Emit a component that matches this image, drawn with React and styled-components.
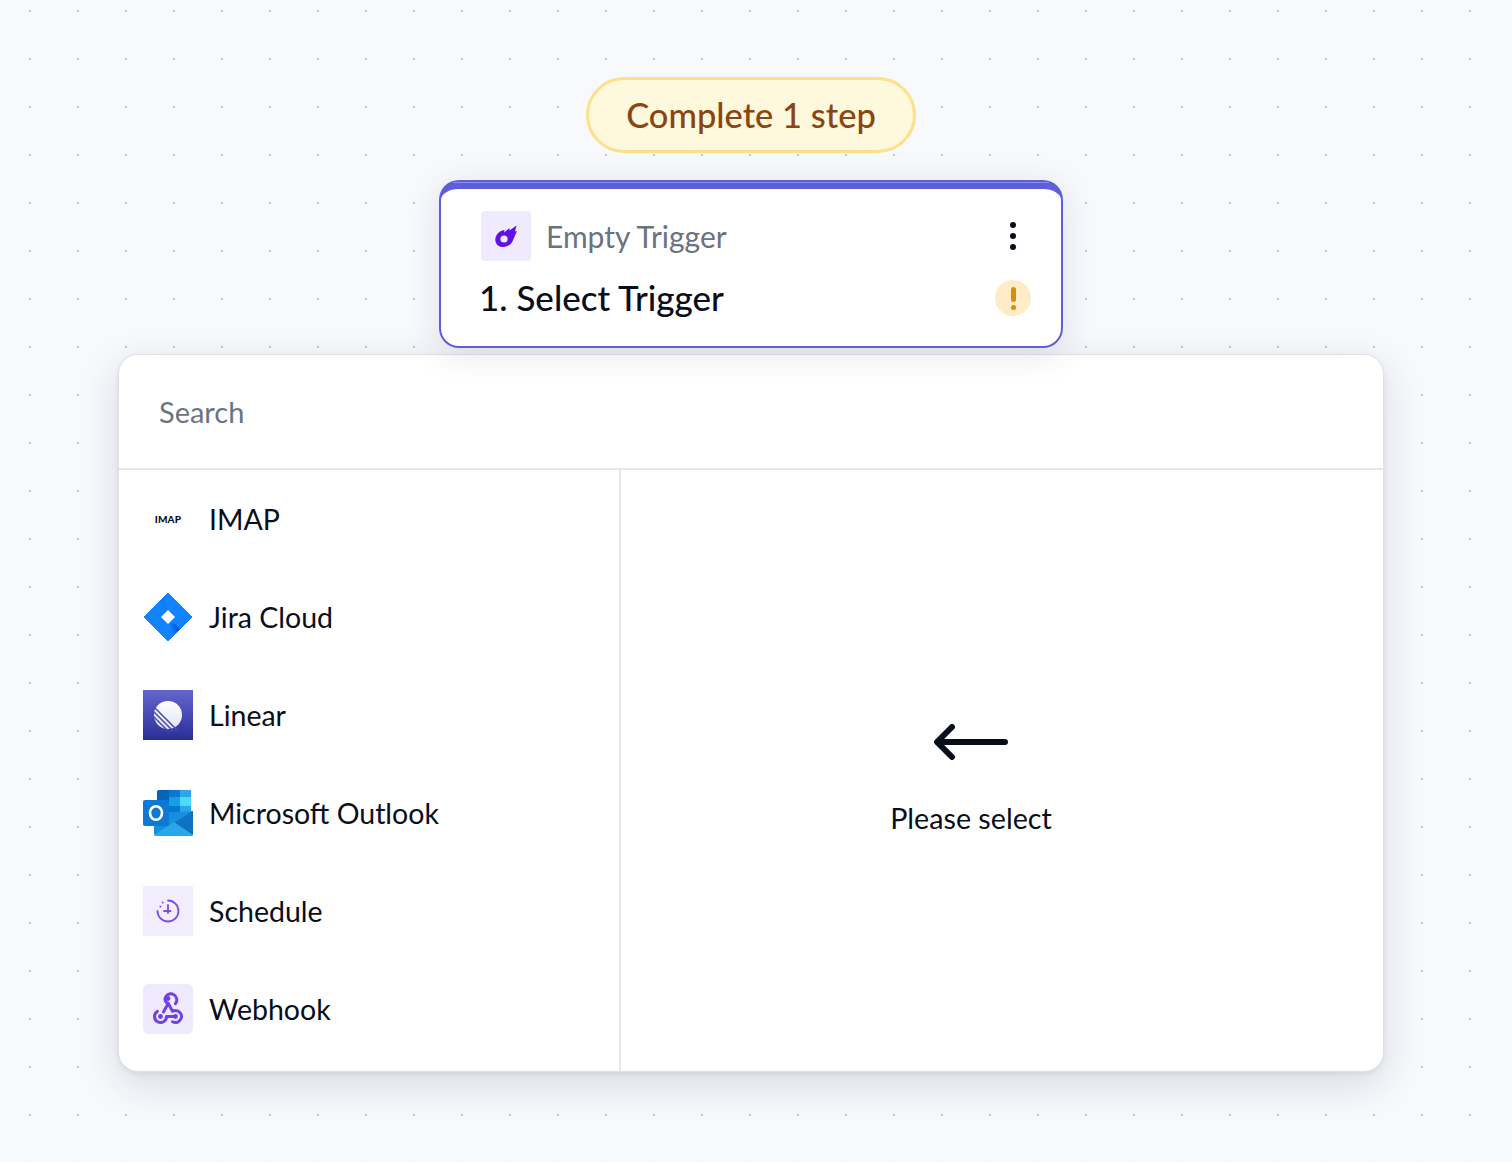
import React from 'react';
import styled, { createGlobalStyle } from 'styled-components';

const GlobalStyle = createGlobalStyle`
  html, body {
    margin: 0;
    padding: 0;
    font-family: Lato, "Noto Sans", sans-serif;
    color: #0a0d1c;
  }
`;

const Canvas = styled.div`
  box-sizing: border-box;
  width: 100%;
  height: 1162px;
  overflow: hidden;
  padding: 77px 10px 0 0;
  display: flex;
  flex-direction: column;
  align-items: center;
  background-color: #f8f9fd;
  background-image: radial-gradient(circle, #c6c8cd 1.1px, transparent 1.6px);
  background-size: 48px 48px;
  background-position: 6px -13px;
`;

const StepPill = styled.div`
  box-sizing: border-box;
  width: 330px;
  height: 76px;
  display: flex;
  align-items: center;
  justify-content: center;
  border: 3px solid #fde08a;
  border-radius: 38px;
  background: #fef8dc;
  color: #8a4510;
  font-size: 34.5px;
  font-weight: 500;
  padding-bottom: 2px;
`;

const TriggerCard = styled.div`
  position: relative;
  box-sizing: border-box;
  width: 624px;
  height: 168px;
  margin: 27px 0 6px;
  padding: 22px 30px 0 40px;
  border: 2px solid #5c5edb;
  border-top-width: 9px;
  border-radius: 20px;
  background: #fff;
  box-shadow: 0 6px 32px rgba(50, 54, 80, 0.13);
  display: flex;
  flex-direction: column;
  gap: 15px;

  &::before {
    content: '';
    position: absolute;
    top: -7px;
    left: 12px;
    right: 12px;
    height: 1px;
    background: #8a8ce8;
  }
`;

const TriggerRow = styled.div`
  display: flex;
  align-items: center;
  justify-content: space-between;
`;

const TriggerLabel = styled.div`
  display: flex;
  align-items: center;
  gap: 15px;
  color: #6b7280;
  font-size: 30px;
`;

const TriggerTitle = styled.div`
  margin-left: -2px;
  padding-bottom: 2px;
  font-size: 35px;
  font-weight: 500;
  color: #0a0d1c;
`;

const IconTile = styled.div`
  flex: none;
  width: 50px;
  height: 50px;
  display: flex;
  align-items: center;
  justify-content: center;
  border-radius: ${(p) => p.$radius || 0}px;
  background: ${(p) => p.$bg || 'transparent'};
`;

const MoreDots = styled.div`
  width: 36px;
  display: flex;
  flex-direction: column;
  align-items: center;
  gap: 5.3px;

  i {
    width: 6px;
    height: 6px;
    border-radius: 50%;
    background: #0a0d1c;
  }
`;

const WarnBadge = styled.div`
  width: 36px;
  height: 36px;
  border-radius: 50%;
  background: #feecc8;
  display: flex;
  flex-direction: column;
  align-items: center;
  justify-content: center;
  gap: 3px;

  b {
    width: 5px;
    height: 15px;
    border-radius: 3px;
    background: #d98e0b;
  }

  i {
    width: 5px;
    height: 5px;
    border-radius: 50%;
    background: #d98e0b;
  }
`;

const Panel = styled.div`
  box-sizing: border-box;
  width: 1266px;
  height: 718px;
  border: 1px solid #dfe1e6;
  border-radius: 20px;
  background: #fff;
  box-shadow: 0 12px 40px rgba(30, 34, 50, 0.14), 0 2px 5px rgba(30, 34, 50, 0.08);
  display: flex;
  flex-direction: column;
  overflow: hidden;
`;

const SearchRow = styled.div`
  flex: none;
  box-sizing: border-box;
  height: 115px;
  padding-left: 40px;
  display: flex;
  align-items: center;
  border-bottom: 2px solid #e5e7eb;
  color: #6b7280;
  font-size: 29px;
`;

const Columns = styled.div`
  flex: 1;
  display: flex;
  min-height: 0;
`;

const List = styled.div`
  flex: none;
  box-sizing: border-box;
  width: 502px;
  border-right: 2px solid #e5e7eb;
  display: flex;
  flex-direction: column;
`;

const ListRow = styled.div`
  flex: none;
  box-sizing: border-box;
  height: 98px;
  padding-left: 24px;
  display: flex;
  align-items: center;
  gap: 16px;
  font-size: 28.5px;
  line-height: 34px;
`;

const Hint = styled.div`
  flex: 1;
  display: flex;
  flex-direction: column;
  align-items: center;
  justify-content: center;
  gap: 41px;
  padding: 17px 62px 0 0;
  font-size: 28.7px;
`;

const ImapMark = styled.span`
  font-size: 10px;
  font-weight: 900;
  letter-spacing: 0.2px;
  color: #0a0d1c;
`;

const CometIcon = () => (
  <svg width="24" height="24" viewBox="0 0 24 24">
    <path d="M22.5 1.5 L21 7.5 L23 7 L19.5 15 C18 20.5 13 23.5 8 23 C3.5 22.5 0.5 18.5 1.5 14 C2.5 9.5 6.5 6.5 10.5 6 L10 8.5 L15.5 4 L15.5 6.5 Z" fill="#5f12e6" />
    <circle cx="10" cy="15" r="3.6" fill="#efeafd" />
  </svg>
);

const JiraIcon = () => (
  <svg width="50" height="50" viewBox="0 0 50 50">
    <defs>
      <linearGradient id="jiraA" x1="0.9" y1="0.3" x2="0.35" y2="0.6">
        <stop offset="0" stopColor="#0052cc" />
        <stop offset="1" stopColor="#1283ff" />
      </linearGradient>
    </defs>
    <path d="M25 1 L49 25 L25 49 L1 25 Z" fill="#1283ff" stroke="#1283ff" strokeWidth="1" strokeLinejoin="round" />
    <path d="M25 18 C20 13 20 6 25 1 L13 13 L19 19 Z" fill="url(#jiraA)" opacity="0.35" />
    <path d="M25 32 C30 37 30 44 25 49 L37 37 L31 31 Z" fill="url(#jiraA)" />
    <path d="M25 18 L32 25 L25 32 L18 25 Z" fill="#fff" />
  </svg>
);

const LinearIcon = () => (
  <svg width="50" height="50" viewBox="0 0 50 50">
    <defs>
      <linearGradient id="linBg" x1="0" y1="0" x2="0" y2="1">
        <stop offset="0" stopColor="#6366cc" />
        <stop offset="1" stopColor="#2b2e96" />
      </linearGradient>
      <linearGradient id="linDisc" x1="0" y1="0" x2="0" y2="1">
        <stop offset="0" stopColor="#ffffff" />
        <stop offset="1" stopColor="#e2e3f8" />
      </linearGradient>
    </defs>
    <rect width="50" height="50" fill="url(#linBg)" />
    <circle cx="25" cy="25" r="14" fill="url(#linDisc)" />
    <g stroke="#4a4cb0" strokeWidth="1.6">
      <path d="M10 21 L30 41" />
      <path d="M10 26 L26 42" />
      <path d="M10 16 L34 40" />
    </g>
  </svg>
);

const OutlookIcon = () => (
  <svg width="50" height="50" viewBox="0 0 50 50">
    <path d="M14 3.5 C14 2.5 15 2 16 2 H46 C47.5 2 48 2.5 48 4 V25 H14 Z" fill="#0364b8" />
    <rect x="26" y="2" width="11" height="7" fill="#0a78d0" />
    <path d="M37 2 H46 C47.5 2 48 2.5 48 4 V9 H37 Z" fill="#28a8ea" />
    <rect x="26" y="9" width="11" height="9" fill="#14a0e8" />
    <rect x="37" y="9" width="11" height="9" fill="#50d9ff" />
    <rect x="26" y="18" width="11" height="8" fill="#0078d4" />
    <rect x="37" y="18" width="11" height="8" fill="#28a8ea" />
    <path d="M11 25 L50 23 V46 C50 47.5 49 48 47 48 H14 C12 48 11 47 11 45 Z" fill="#1490df" />
    <path d="M50 23 L31 35 L50 47 Z" fill="#0a5fae" opacity="0.6" />
    <path d="M11 47 L31 34 L50 47 C50 47.5 49 48 47 48 H14 C12 48 11 47.5 11 47 Z" fill="#28a8ea" />
    <rect x="0" y="12" width="26" height="26" rx="2" fill="#0f78d4" />
    <ellipse cx="13" cy="25" rx="6" ry="6.8" fill="none" stroke="#fff" strokeWidth="2.6" />
  </svg>
);

const ScheduleIcon = () => (
  <svg width="24" height="24" viewBox="0 0 24 24" fill="none" stroke="#7c4ce8" strokeWidth="1.8" strokeLinecap="round">
    <path d="M12 1.5 A10.5 10.5 0 1 1 1.5 12" />
    <path d="M12 6 V14 M8 12 H14.5" />
    <path d="M4.4 7.4 V7.5 M6.7 3.4 V3.5" strokeWidth="2" />
  </svg>
);

const WebhookIcon = () => (
  <svg width="36" height="36" viewBox="0 0 24 24" fill="none" stroke="#6e43e0" strokeWidth="2" strokeLinecap="round" strokeLinejoin="round">
    <path d="M4.876 13.61a4 4 0 1 0 6.124 3.39h6" />
    <path d="M15.066 20.502a4 4 0 1 0 1.934 -7.502c-.706 0 -1.424 .179 -2 .5l-3 -5.5" />
    <path d="M16.934 8.502a4 4 0 1 0 -6.934 -3.502c0 1.506 .77 2.818 2 3.5l-3 5.5" />
    <g fill="#6e43e0" stroke="none">
      <circle cx="12" cy="5" r="1.6" />
      <circle cx="7" cy="17" r="1.6" />
      <circle cx="17" cy="17" r="1.6" />
    </g>
  </svg>
);

const ArrowIcon = () => (
  <svg width="76" height="36" viewBox="0 0 76 36" fill="none" stroke="#0a0d1c" strokeWidth="6" strokeLinecap="round" strokeLinejoin="round">
    <path d="M19 3 L4 18 L19 33" />
    <path d="M5 18 H72" />
  </svg>
);

const triggers = [
  { name: 'IMAP', icon: <ImapMark>IMAP</ImapMark> },
  { name: 'Jira Cloud', icon: <JiraIcon /> },
  { name: 'Linear', icon: <LinearIcon /> },
  { name: 'Microsoft Outlook', icon: <OutlookIcon /> },
  { name: 'Schedule', icon: <ScheduleIcon />, bg: '#f1edfd' },
  { name: 'Webhook', icon: <WebhookIcon />, bg: '#eee9fd', radius: 6 },
];

export default function App() {
  return (
    <>
      <GlobalStyle />
      <Canvas>
        <StepPill>Complete 1 step</StepPill>
        <TriggerCard>
          <TriggerRow>
            <TriggerLabel>
              <IconTile $bg="#efeafd" $radius={4}>
                <CometIcon />
              </IconTile>
              Empty Trigger
            </TriggerLabel>
            <MoreDots>
              <i />
              <i />
              <i />
            </MoreDots>
          </TriggerRow>
          <TriggerRow>
            <TriggerTitle>1. Select Trigger</TriggerTitle>
            <WarnBadge>
              <b />
              <i />
            </WarnBadge>
          </TriggerRow>
        </TriggerCard>
        <Panel>
          <SearchRow>Search</SearchRow>
          <Columns>
            <List>
              {triggers.map((t) => (
                <ListRow key={t.name}>
                  <IconTile $bg={t.bg} $radius={t.radius}>
                    {t.icon}
                  </IconTile>
                  <span>{t.name}</span>
                </ListRow>
              ))}
            </List>
            <Hint>
              <ArrowIcon />
              Please select
            </Hint>
          </Columns>
        </Panel>
      </Canvas>
    </>
  );
}
